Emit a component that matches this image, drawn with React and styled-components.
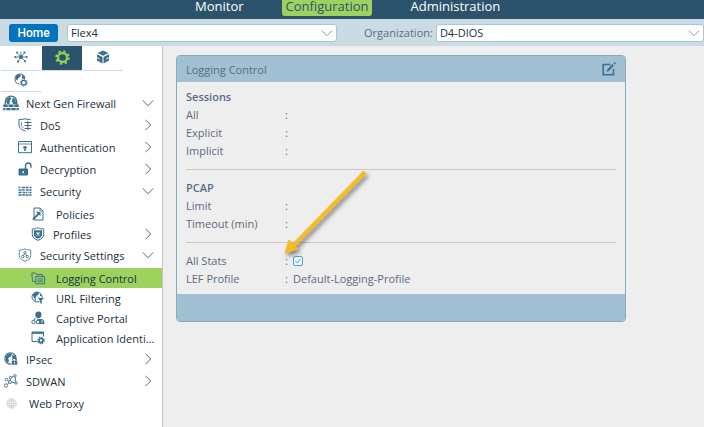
import React from 'react';
import styled, { createGlobalStyle, css } from 'styled-components';

const COLORS = {
    navy: '#2b546c',
    blue: '#a1c0d4',
    pale: '#cbdbe4',
    green: '#9ed25f',
    icon: '#3b708f',
    text: '#203040',
    muted: '#5b6b7f',
    canvas: '#eeeeee'
};

const GlobalStyle = createGlobalStyle`
    * {
        box-sizing: border-box;
    }
    body {
        margin: 0;
        background: ${COLORS.canvas};
        color: ${COLORS.text};
        font-family: 'Open Sans', 'Noto Sans', sans-serif;
        font-size: 11px;
    }
    button,
    select,
    input {
        font: inherit;
        color: inherit;
    }
`;

const Page = styled.div`
    display: flex;
    flex-direction: column;
    min-height: 100vh;
    overflow: hidden;
`;

const TopNav = styled.nav`
    display: flex;
    gap: 34px;
    height: 19px;
    padding-left: 191px;
    background: ${COLORS.navy};
`;

const NavLink = styled.a`
    height: 16px;
    padding: 0 4px;
    border-radius: 0 0 3px 3px;
    font-size: 13px;
    line-height: 13px;
    text-decoration: none;
    color: #fff;
    ${(props) =>
        props.$active &&
        css`
            background: ${COLORS.green};
            color: ${COLORS.navy};
        `}
`;

const Toolbar = styled.div`
    display: flex;
    align-items: center;
    height: 27px;
    padding-left: 9px;
    background: ${COLORS.pale};
`;

const HomeButton = styled.button`
    flex: 0 0 49px;
    height: 18px;
    margin-right: 9px;
    padding: 0;
    border: 0;
    border-radius: 3px;
    background: #0473bd;
    color: #fff;
    font-family: Roboto, sans-serif;
    font-size: 12px;
    font-weight: 500;
    line-height: 18px;
`;

const SelectBox = styled.div`
    position: relative;
    flex: ${(props) => (props.$grow ? '1 1 0' : '0 0 270px')};
    height: 18px;

    svg {
        position: absolute;
        top: 3px;
        right: 4px;
        pointer-events: none;
    }
`;

const Select = styled.select`
    display: block;
    width: 100%;
    height: 18px;
    padding: 0 20px 0 3px;
    border: 1px solid #a4c8d9;
    border-radius: 3px;
    background: #fff;
    appearance: none;
    line-height: 16px;
`;

const ToolbarLabel = styled.label`
    flex: none;
    margin: 0 3px 0 27px;
    color: ${COLORS.muted};
`;

const Content = styled.div`
    display: flex;
    flex: 1;
`;

const Sidebar = styled.aside`
    flex: 0 0 163px;
    min-width: 0;
    border-right: 1px solid #c6c6c6;
    background: #fff;
`;

const Tabs = styled.div`
    display: grid;
    grid-template-columns: repeat(3, 40px);
    grid-template-rows: 25px 21px;
    column-gap: 1px;
    padding-left: 1px;
    width: 123px;
`;

const Tab = styled.button`
    display: flex;
    align-items: center;
    justify-content: center;
    padding: 0 0 2px;
    border: 0;
    border-bottom: 1px solid ${COLORS.pale};
    background: ${(props) => (props.$active ? COLORS.navy : '#fff')};
    color: ${(props) => (props.$active ? '#8fd14f' : COLORS.icon)};
`;

const Tree = styled.ul`
    margin: 0;
    padding: 0;
    list-style: none;
`;

const INDENTS = [4, 18, 31];

const rowStyle = css`
    display: flex;
    align-items: center;
    width: 100%;
    height: ${(props) => (props.$level === 2 ? 20 : 22)}px;
    padding: 0 8px 0 ${(props) => INDENTS[props.$level]}px;
    border: 0;
    background: ${(props) => (props.$active ? COLORS.green : 'transparent')};
    color: ${COLORS.text};
    text-align: left;
    text-decoration: none;
`;

const Branch = styled.button`
    ${rowStyle}
    gap: 8px;
`;

const Leaf = styled.a`
    ${rowStyle}
    gap: 11px;
    padding-right: 4px;
`;

const SubTree = styled(Tree)`
    padding-top: ${(props) => (props.$level === 2 ? 2 : 0)}px;
`;

const IconSlot = styled.span`
    display: flex;
    flex: 0 0 14px;
    align-items: center;
    justify-content: center;
    min-width: 0;
    height: 16px;
    color: ${(props) => (props.$faded ? '#c3ccd2' : COLORS.icon)};

    svg {
        flex: none;
    }
`;

const ItemLabel = styled.span`
    flex: 1;
    min-width: 0;
    overflow: hidden;
    white-space: nowrap;
    text-overflow: ellipsis;
`;

const Main = styled.main`
    flex: 1;
    min-width: 0;
    padding: 9px 13px;
`;

const Panel = styled.section`
    position: relative;
    max-width: 450px;
    border: 1px solid #86aabb;
    border-radius: 4px;
    color: ${COLORS.muted};
`;

const PanelHeader = styled.header`
    display: flex;
    align-items: center;
    justify-content: space-between;
    height: 26px;
    padding: 0 9px;
    border-radius: 3px 3px 0 0;
    background: ${COLORS.blue};
`;

const PanelTitle = styled.h2`
    margin: 0;
    font-size: 11px;
    font-weight: 400;
`;

const EditButton = styled.button`
    display: flex;
    padding: 0;
    border: 0;
    background: none;
    color: ${COLORS.icon};
`;

const PanelBody = styled.div`
    padding: 6px 9px;
`;

const PanelFooter = styled.footer`
    height: 27px;
    border-radius: 0 0 3px 3px;
    background: ${COLORS.blue};
`;

const Group = styled.div`
    line-height: 18px;

    & + & {
        margin-top: 9px;
        padding-top: 9px;
        border-top: 1px solid #c8c8c8;
    }
`;

const GroupTitle = styled.h3`
    margin: 0;
    font-size: 11px;
    font-weight: 600;
`;

const Field = styled.div`
    display: grid;
    grid-template-columns: 99px 8px 1fr;
    align-items: center;
    height: 18px;
`;

const Check = styled.input`
    display: block;
    width: 10px;
    height: 10px;
    margin: 0;
    appearance: none;
    border: 1px solid #4f9fdc;
    border-radius: 2px;
    background: #f4f8fb;
`;

const CheckBox = styled.span`
    position: relative;
    width: 10px;

    svg {
        position: absolute;
        top: 2px;
        left: 2px;
        pointer-events: none;
    }
`;

const Pointer = styled.svg`
    position: absolute;
    top: 110px;
    left: 102px;
    overflow: visible;
    pointer-events: none;
    filter: drop-shadow(2px 3px 2px rgba(0, 0, 0, 0.45));
`;

const Icon = ({ size = 14, children }) => (
    <svg width={size} height={size} viewBox='0 0 14 14' fill='none' stroke='currentColor' strokeWidth='1' aria-hidden='true'>
        {children}
    </svg>
);

const Chevron = ({ down, color = '#4c6382' }) => (
    <svg width='12' height='12' viewBox='0 0 12 12' fill='none' stroke={color} aria-hidden='true'>
        <path d={down ? 'M.8 3.500 6 8.700l5.200-5.200' : 'M3.500.8 8.700 6l-5.200 5.200'} />
    </svg>
);

const SHIELD = 'M7 .8c2 1 3.800 1.200 5.700 1.200v5.500c0 3-2.500 4.700-5.700 5.800-3.200-1.100-5.700-2.800-5.700-5.800V2C3.200 2 5 1.800 7 .8z';

// 侧边栏图标
const ICONS = {
    network: (
        <Icon>
            <path d='M7 7 3 2.500M7 7l3.500-4.500M7 7H1.500M7 7h5.500M7 7l-3 4.500M7 7l4 4M7 7V1.500' strokeWidth='.8' />
            <g fill='currentColor' stroke='none'>
                <circle cx='7' cy='7' r='2' />
                <circle cx='3' cy='2.500' r='1' />
                <circle cx='10.500' cy='2.500' r='1.100' />
                <circle cx='1.300' cy='7' r='1.100' />
                <circle cx='12.700' cy='7' r='1.100' />
                <circle cx='4' cy='11.700' r='1.100' />
                <circle cx='11' cy='11.300' r='1.100' />
            </g>
        </Icon>
    ),
    gear: (
        <Icon size={15}>
            <circle cx='7' cy='7' r='4.200' strokeWidth='2.200' />
            <circle cx='7' cy='7' r='5.900' strokeWidth='1.800' strokeDasharray='2.300 2.334' />
        </Icon>
    ),
    cube: (
        <Icon>
            <g fill='currentColor' stroke='none'>
                <path d='M7 .5 12.500 3 7 5.800 1.500 3z' />
                <path d='M1 4.200 6.500 7v6.500L1 10.500z' />
                <path d='M13 4.200 7.500 7v6.500l5.500-3z' />
            </g>
            <path d='M1 7.500 3.800 9M13 7.500 10.200 9' stroke='#fff' strokeWidth='.9' />
        </Icon>
    ),
    globeGear: (
        <Icon>
            <path d='M5.500 11A5 5 0 1 1 11 5.500' />
            <path d='M2 2.500 5 1l2 1-1 2-2 1.500-.5 2L1.500 6zM8 2l3 1.500-.5 2.500L8 5.500z' fill='currentColor' stroke='none' />
            <circle cx='9.800' cy='9.800' r='2.400' strokeWidth='1.300' />
            <circle cx='9.800' cy='9.800' r='3.500' strokeDasharray='1.200 1.500' />
        </Icon>
    ),
    firewall: (
        <Icon size={16}>
            <path d='M2 8.500V6a5 5 0 0 1 10 0v2.500' strokeWidth='1.200' />
            <path d='M3 4 5.500 1.700 7.500 2.500 6 5 5.500 8H4L3 6.500zM8.500 2.200l2.500 2 .5 3.800H9L7.800 5.500z' fill='currentColor' stroke='none' />
            <path d='M.2 9.500h13.600M.2 12.300h13.600' strokeWidth='2.200' />
            <path d='M4.500 8.500v2.300M9.500 8.500v2.300M2.500 11.200v2.500M7 11.200v2.500M11.500 11.200v2.500M0 10.900h14' stroke='#fff' strokeWidth='.7' />
        </Icon>
    ),
    dos: (
        <Icon>
            <path d='M7.500 13C3.500 12 1 10 1 7V1.500C3 1.500 5 1.500 7 .8c2 .7 4 .7 5.500.7' />
            <path d='M3.500 4v4l2.500 2.500' strokeWidth='.7' />
            <path d='M6.500 4.500h7M6.500 7.500h7M6.500 10.500H13M9.800 3v9' />
        </Icon>
    ),
    auth: (
        <Icon>
            <path d='M.5 1.500h13v11.200H.5z' />
            <path d='M.5 4h13' strokeWidth='.8' />
            <path d='M7 11V6M5 7.500h4' strokeWidth='1.500' />
        </Icon>
    ),
    unlock: (
        <Icon>
            <path d='M1 7h8.500v6H1z' fill='currentColor' />
            <path d='M7.500 7V3.700a2.700 2.700 0 0 1 5.400 0v2' strokeWidth='1.400' />
            <path d='M5.200 9v2.200' stroke='#fff' strokeWidth='1.300' />
        </Icon>
    ),
    bricks: (
        <Icon>
            <path d='M.5 3.500h13M.5 6h13M.5 8.500h13M.5 11h13' strokeDasharray='3 .6' strokeWidth='1.500' />
            <path d='M2.500 2.700V5.300M7 5v2.500M11 2.700v2.500M4.500 7.500v2.600M9.500 7.500v2.600' strokeWidth='.7' stroke='#fff' />
        </Icon>
    ),
    policies: (
        <Icon>
            <path d='M3 1h6l3 3v9H3z' />
            <path d='M9 1v3h3' strokeWidth='.8' />
            <path d='M5 4.500 9.500 5v4L8 7.800l-5 5L1.500 13l.5-2 4.500-4.500z' fill='currentColor' stroke='none' />
        </Icon>
    ),
    profiles: (
        <Icon>
            <path d={SHIELD} />
            <path d='M3 3.300h8v4.500C11 9.800 9 11 7 11.700 5 11 3 9.800 3 7.800z' fill='currentColor' stroke='none' />
            <path d='m5.500 5.500 3 3M8.500 5.500l-3 3' stroke='#fff' strokeWidth='1.200' />
        </Icon>
    ),
    settings: (
        <Icon>
            <path d={SHIELD} strokeWidth='.8' />
            <circle cx='7' cy='4.800' r='1.200' strokeWidth='.9' />
            <circle cx='4.800' cy='8.500' r='1.200' strokeWidth='.9' />
            <circle cx='9.200' cy='8.500' r='1.200' strokeWidth='.9' />
            <path d='M6.400 6 5.400 7.400M7.600 6l1 1.400' strokeWidth='.8' />
        </Icon>
    ),
    logging: (
        <Icon>
            <path d='M4.500 10.500H1.500L.8 2h3.700l1 1.500h6V5.500' />
            <path d='M4.800 5.500h8.700v7.300H4.800z' />
            <path d='M6.500 7.700h5.500M6.500 9.200h5.500M6.500 10.700h5.500' strokeWidth='.8' />
        </Icon>
    ),
    url: (
        <Icon>
            <circle cx='6' cy='6' r='5' />
            <path d='M1.500 4 4 1.500 7 1l1 2-2.500 2-1 2L5 9.500 4 10 3.500 7.500zM9 2.500 11 5H9z' fill='currentColor' stroke='none' />
            <path d='M6 6.500h7.500L11 9.500v4L8.700 12V9.500z' fill='currentColor' stroke='#fff' strokeWidth='.6' />
        </Icon>
    ),
    portal: (
        <Icon>
            <path d='M4.300 3.700a3.100 3.100 0 1 1 6.200 0c0 2-1.200 3.600-3.100 3.600S4.300 5.700 4.300 3.700z' fill='currentColor' stroke='none' />
            <path d='M6 8h4.500c2 .3 2.800 1.500 3 5H8z' fill='currentColor' stroke='none' />
            <circle cx='2.500' cy='11' r='1.700' />
            <circle cx='7' cy='11' r='1.700' fill='#fff' />
            <path d='M3 9.500 4.500 7' />
            <path d='M11 9v3' stroke='#fff' strokeWidth='.8' />
        </Icon>
    ),
    application: (
        <Icon>
            <path d='M6.500 10.500H1V1h11.500v4.500' />
            <path d='M1 2h11.500' strokeWidth='1.800' />
            <circle cx='10' cy='9.500' r='2' strokeWidth='1.700' />
            <circle cx='10' cy='9.500' r='3.200' strokeWidth='1.200' strokeDasharray='1.400 1.110' />
        </Icon>
    ),
    ipsec: (
        <Icon>
            <circle cx='6.500' cy='6.500' r='5.600' strokeWidth='1.200' />
            <path d='M1.500 4.500 5 1.500l3 .5-1 2.500-3 1.500 1 2.500-1 2.500-2-2.500zM8.500 3l3 1 .5 3H9L8 5z' fill='currentColor' stroke='none' />
            <path d='M7.500 8.500h6V13h-6z' fill='currentColor' stroke='#fff' strokeWidth='.5' />
            <path d='M8.800 8.500V7.300a1.700 1.700 0 0 1 3.400 0v1.200' />
            <path d='M10.500 10v1.500' stroke='#fff' />
        </Icon>
    ),
    sdwan: (
        <Icon>
            <g strokeWidth='.9'>
                <circle cx='2' cy='11.500' r='1.700' />
                <circle cx='2.500' cy='5.500' r='1.300' />
                <circle cx='6' cy='8' r='1.500' />
                <circle cx='6.500' cy='3.500' r='1.200' />
                <circle cx='11' cy='1.800' r='1.200' />
                <circle cx='12' cy='9' r='1.200' />
                <path d='m3.200 10.300 1.600-1.300M3.700 6.300l1.100.8M6.200 6.500l.2-1.800M7.600 3.200l2.200-1M11.200 3l.6 4.800M7.500 8.200l3.300.6' />
            </g>
        </Icon>
    ),
    globe: (
        <Icon size={11}>
            <circle cx='7' cy='7' r='6' />
            <path d='M1 7h12M2 4h10M2 10h10M7 1v12M7 1C3 4 3 10 7 13M7 1c4 3 4 9 0 12' />
        </Icon>
    )
};

const TABS = [
    { key: 'network', title: 'Networking' },
    { key: 'gear', title: 'Services', active: true },
    { key: 'cube', title: 'Objects' },
    { key: 'globeGear', title: 'Others' }
];

const MENU = [
    {
        name: 'Next Gen Firewall',
        icon: 'firewall',
        children: [
            { name: 'DoS', icon: 'dos', children: [] },
            { name: 'Authentication', icon: 'auth', children: [] },
            { name: 'Decryption', icon: 'unlock', children: [] },
            {
                name: 'Security',
                icon: 'bricks',
                children: [
                    { name: 'Policies', icon: 'policies' },
                    { name: 'Profiles', icon: 'profiles', children: [] }
                ]
            },
            {
                name: 'Security Settings',
                icon: 'settings',
                children: [
                    { name: 'Logging Control', icon: 'logging', active: true },
                    { name: 'URL Filtering', icon: 'url' },
                    { name: 'Captive Portal', icon: 'portal' },
                    { name: 'Application Identification', icon: 'application' }
                ]
            }
        ]
    },
    { name: 'IPsec', icon: 'ipsec', children: [] },
    { name: 'SDWAN', icon: 'sdwan', children: [] },
    { name: 'Web Proxy', icon: 'globe', faded: true }
];

const renderItems = (items, level) =>
    items.map((item) => {
        const inner = (
            <>
                <IconSlot $faded={item.faded}>{ICONS[item.icon]}</IconSlot>
                <ItemLabel>{item.name}</ItemLabel>
            </>
        );
        if (!item.children) {
            return (
                <li key={item.name}>
                    <Leaf href='#' $level={level} $active={item.active}>
                        {inner}
                    </Leaf>
                </li>
            );
        }
        const open = item.children.length > 0;
        return (
            <li key={item.name}>
                <Branch type='button' $level={level} aria-expanded={open}>
                    {inner}
                    <Chevron down={open} />
                </Branch>
                {open && <SubTree $level={level + 1}>{renderItems(item.children, level + 1)}</SubTree>}
            </li>
        );
    });

const EmptyField = ({ name }) => (
    <Field>
        <span>{name}</span>
        <span>:</span>
    </Field>
);

export default function App() {
    return (
        <Page>
            <GlobalStyle />
            <TopNav>
                <NavLink href='#'>Monitor</NavLink>
                <NavLink href='#' $active>
                    Configuration
                </NavLink>
                <NavLink href='#'>Administration</NavLink>
            </TopNav>
            <Toolbar>
                <HomeButton type='button'>Home</HomeButton>
                <SelectBox>
                    <Select aria-label='Appliance' defaultValue='Flex4'>
                        <option>Flex4</option>
                    </Select>
                    <Chevron down color='#999' />
                </SelectBox>
                <ToolbarLabel htmlFor='organization'>Organization:</ToolbarLabel>
                <SelectBox $grow>
                    <Select id='organization' defaultValue='D4-DIOS'>
                        <option>D4-DIOS</option>
                    </Select>
                    <Chevron down color='#999' />
                </SelectBox>
            </Toolbar>
            <Content>
                <Sidebar>
                    <Tabs>
                        {TABS.map((tab) => (
                            <Tab key={tab.key} type='button' aria-label={tab.title} $active={tab.active}>
                                {ICONS[tab.key]}
                            </Tab>
                        ))}
                    </Tabs>
                    <Tree>{renderItems(MENU, 0)}</Tree>
                </Sidebar>
                <Main>
                    <Panel>
                        <PanelHeader>
                            <PanelTitle>Logging Control</PanelTitle>
                            <EditButton type='button' aria-label='Edit'>
                                <Icon>
                                    <path d='M8.500 2.500H1.200v10.300h10.300V7' strokeWidth='1.600' />
                                    <path d='m4.500 9.700.5-2L10.500 2 12 3.500 6.500 9.200z' fill='currentColor' stroke='none' />
                                    <path d='m12 .5 1.500 1.500' strokeWidth='1.500' />
                                </Icon>
                            </EditButton>
                        </PanelHeader>
                        <PanelBody>
                            <Group>
                                <GroupTitle>Sessions</GroupTitle>
                                <EmptyField name='All' />
                                <EmptyField name='Explicit' />
                                <EmptyField name='Implicit' />
                            </Group>
                            <Group>
                                <GroupTitle>PCAP</GroupTitle>
                                <EmptyField name='Limit' />
                                <EmptyField name='Timeout (min)' />
                            </Group>
                            <Group>
                                <Field>
                                    <label htmlFor='all-stats'>All Stats</label>
                                    <span>:</span>
                                    <CheckBox>
                                        <Check id='all-stats' type='checkbox' defaultChecked />
                                        <svg width='6' height='6' viewBox='0 0 6 6' fill='none' stroke='#4f9fdc' aria-hidden='true'>
                                            <path d='m.5 3 1.700 1.800L5.500 1' />
                                        </svg>
                                    </CheckBox>
                                </Field>
                                <Field>
                                    <span>LEF Profile</span>
                                    <span>:</span>
                                    <span>Default-Logging-Profile</span>
                                </Field>
                            </Group>
                        </PanelBody>
                        <PanelFooter />
                        <Pointer width='92' height='92' viewBox='0 0 92 92' aria-hidden='true'>
                            <path d='M86 6 15 79' stroke='#f4bd24' strokeWidth='4' />
                            <path d='M6 87 10 74l9 9z' fill='#f4bd24' stroke='#f4bd24' strokeLinejoin='round' />
                        </Pointer>
                    </Panel>
                </Main>
            </Content>
        </Page>
    );
}
